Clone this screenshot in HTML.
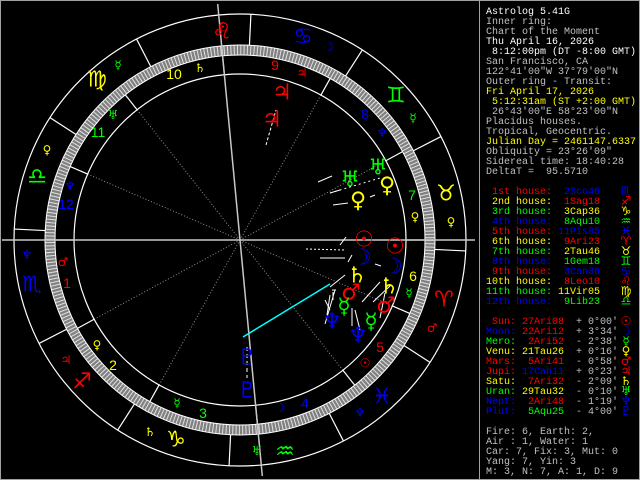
<!DOCTYPE html>
<html><head><meta charset="utf-8"><style>
html,body{margin:0;padding:0;background:#000;}
body{width:640px;height:480px;overflow:hidden;position:relative;}
svg{position:absolute;left:0;top:0;}
.t{font-family:"Liberation Mono","DejaVu Sans Mono",monospace;font-size:10px;white-space:pre;}
.g{font-family:"DejaVu Sans",sans-serif;text-anchor:middle;dominant-baseline:central;}
.n{font-family:"Liberation Sans",sans-serif;font-size:14px;text-anchor:middle;dominant-baseline:central;}
</style></head><body>
<svg width="640" height="480" viewBox="0 0 640 480" xmlns="http://www.w3.org/2000/svg">
<rect x="0.5" y="0.5" width="639" height="479" fill="none" stroke="#a0a0a0"/>
<line x1="479.5" y1="0" x2="479.5" y2="480" stroke="#a0a0a0"/>
<g transform="translate(240,240)" fill="none">
  <g stroke="#909090" stroke-width="1" stroke-dasharray="1 2">
    <line x1="0" y1="0" x2="166" y2="0" transform="rotate(-208.53)"/>
    <line x1="0" y1="0" x2="166" y2="0" transform="rotate(-240.83)"/>
    <line x1="0" y1="0" x2="166" y2="0" transform="rotate(-308.31)"/>
    <line x1="0" y1="0" x2="166" y2="0" transform="rotate(23.39)"/>
    <line x1="0" y1="0" x2="166" y2="0" transform="rotate(-28.53)"/>
    <line x1="0" y1="0" x2="166" y2="0" transform="rotate(-60.83)"/>
    <line x1="0" y1="0" x2="166" y2="0" transform="rotate(-128.31)"/>
    <line x1="0" y1="0" x2="166" y2="0" transform="rotate(-156.61)"/>
  </g>
  <circle r="226" stroke="#fff" stroke-width="1.2"/>
  <circle r="166" stroke="#fff" stroke-width="1.2"/>
  <circle r="190" stroke="#808080" stroke-width="10"/>
  <circle r="190" stroke="#e0e0e0" stroke-width="10" stroke-dasharray="1 2.316"/>
  <circle r="195" stroke="#fff" stroke-width="1"/>
  <circle r="185" stroke="#fff" stroke-width="1"/>
  <g stroke="#fff" stroke-width="1.2">
    <line x1="195" x2="226" transform="rotate(32.77)"/>
    <line x1="195" x2="226" transform="rotate(2.77)"/>
    <line x1="195" x2="226" transform="rotate(-27.23)"/>
    <line x1="195" x2="226" transform="rotate(-57.23)"/>
    <line x1="195" x2="226" transform="rotate(-87.23)"/>
    <line x1="195" x2="226" transform="rotate(-117.23)"/>
    <line x1="195" x2="226" transform="rotate(-147.23)"/>
    <line x1="195" x2="226" transform="rotate(-177.23)"/>
    <line x1="195" x2="226" transform="rotate(-207.23)"/>
    <line x1="195" x2="226" transform="rotate(-237.23)"/>
    <line x1="195" x2="226" transform="rotate(-267.23)"/>
    <line x1="195" x2="226" transform="rotate(-297.23)"/>
    <line x1="166" x2="185" transform="rotate(-180)"/>
    <line x1="166" x2="185" transform="rotate(-208.53)"/>
    <line x1="166" x2="185" transform="rotate(-240.83)"/>
    <line x1="166" x2="185" transform="rotate(-275.4)"/>
    <line x1="166" x2="185" transform="rotate(-308.31)"/>
    <line x1="166" x2="185" transform="rotate(23.39)"/>
    <line x1="166" x2="185" transform="rotate(0)"/>
    <line x1="166" x2="185" transform="rotate(-28.53)"/>
    <line x1="166" x2="185" transform="rotate(-60.83)"/>
    <line x1="166" x2="185" transform="rotate(-95.4)"/>
    <line x1="166" x2="185" transform="rotate(-128.31)"/>
    <line x1="166" x2="185" transform="rotate(-156.61)"/>
  </g>
  <g stroke="#c8c8c8" stroke-width="1.5">
    <line x1="-238" x2="235" y1="0" y2="0"/>
    <line x1="-237" x2="237" transform="rotate(-95.4)"/>
  </g>
</g>
<g stroke="#fff" stroke-width="1" fill="none">
  <line x1="332" y1="176" x2="318" y2="182"/>
  <line x1="340" y1="190" x2="330" y2="193"/>
  <line x1="348" y1="203" x2="333" y2="205"/>
  <line x1="375" y1="195" x2="370" y2="197"/>
  <line x1="340" y1="245" x2="346" y2="237"/>
  <line x1="348" y1="262" x2="352" y2="255"/>
  <line x1="345" y1="275" x2="330" y2="287"/>
  <line x1="381" y1="266" x2="375" y2="264"/>
  <line x1="380" y1="282" x2="362" y2="302"/>
  <line x1="325" y1="300" x2="330" y2="310"/>
  <line x1="332" y1="290" x2="336" y2="290"/>
  <line x1="330" y1="295" x2="327" y2="315"/>
  <line x1="333" y1="292" x2="333" y2="300"/>
  <line x1="335" y1="290" x2="325" y2="324"/>
  <line x1="352" y1="308" x2="352" y2="326"/>
  <line x1="355" y1="310" x2="360" y2="330"/>
  <line x1="385" y1="293" x2="380" y2="318"/>
  <line x1="391" y1="285" x2="373" y2="302"/>
  <line x1="266" y1="145" x2="276" y2="110" stroke-dasharray="3 2"/>
  <line x1="306" y1="249" x2="345" y2="250" stroke-dasharray="2 2"/>
  <line x1="320" y1="258" x2="345" y2="258"/>
  <line x1="330" y1="193" x2="380" y2="178"  stroke-dasharray="2 3"/>
  <line x1="247" y1="347" x2="247" y2="378" stroke-dasharray="4 3"/>
</g>
<line x1="243" y1="337" x2="330" y2="284" stroke="#00ffff" stroke-width="1.5"/>
<g class="g" font-size="22">
  <text x="222" y="32" fill="#f00">♌</text>
  <text x="97" y="80" fill="#ff0">♍</text>
  <text x="37" y="177" fill="#0f0">♎</text>
  <text x="32" y="285" fill="#00f">♏</text>
  <text x="82" y="382" fill="#f00">♐</text>
  <text x="176" y="440" fill="#ff0">♑</text>
  <text x="285" y="452" fill="#0f0">♒</text>
  <text x="382" y="397" fill="#00f">♓</text>
  <text x="444" y="300" fill="#f00">♈</text>
  <text x="446" y="194" fill="#ff0">♉</text>
  <text x="396" y="96" fill="#0f0">♊</text>
  <text x="303" y="37" fill="#00f">♋</text>
</g>
<g class="g" font-size="12">
  <text x="223" y="27" fill="#f00">☉</text>
  <text x="200" y="68" fill="#ff0">♄</text>
  <text x="118" y="65" fill="#0f0">☿</text>
  <text x="113" y="115" fill="#0f0">♅</text>
  <text x="47" y="150" fill="#ff0">♀</text>
  <text x="70" y="186" fill="#00f">♆</text>
  <text x="27" y="255" fill="#00f">♆</text>
  <text x="63" y="262" fill="#f00">♂</text>
  <text x="97" y="345" fill="#ff0">♀</text>
  <text x="66" y="360" fill="#f00">♃</text>
  <text x="177" y="403" fill="#0f0">☿</text>
  <text x="150" y="432" fill="#ff0">♄</text>
  <text x="280" y="408" fill="#00f">☽</text>
  <text x="257" y="451" fill="#0f0">♅</text>
  <text x="360" y="413" fill="#00f">♆</text>
  <text x="365" y="363" fill="#f00">☉</text>
  <text x="432" y="328" fill="#f00">♂</text>
  <text x="409" y="293" fill="#0f0">☿</text>
  <text x="415" y="217" fill="#ff0">♀</text>
  <text x="451" y="222" fill="#ff0">♀</text>
  <text x="413" y="118" fill="#0f0">☿</text>
  <text x="382" y="133" fill="#00f">♆</text>
  <text x="329" y="47" fill="#00f">☽</text>
  <text x="302" y="73" fill="#f00">♃</text>
</g>
<g class="n">
  <text x="67" y="283" fill="#f00">1</text>
  <text x="113" y="365" fill="#ff0">2</text>
  <text x="203" y="413" fill="#0f0">3</text>
  <text x="305" y="403" fill="#00f">4</text>
  <text x="380" y="347" fill="#f00">5</text>
  <text x="413" y="276" fill="#ff0">6</text>
  <text x="412" y="195" fill="#0f0">7</text>
  <text x="365" y="114" fill="#00f">8</text>
  <text x="275" y="65" fill="#f00">9</text>
  <text x="174" y="74" fill="#ff0">10</text>
  <text x="98" y="132" fill="#0f0">11</text>
  <text x="66" y="204" fill="#00f">12</text>
</g>
<g class="g" font-size="22">
  <text x="282" y="93" fill="#f00">♃</text>
  <text x="272" y="120" fill="#f00">♃</text>
  <text x="378" y="168" fill="#0f0">♅</text>
  <text x="350" y="180" fill="#0f0">♅</text>
  <text x="387" y="186" fill="#ff0">♀</text>
  <text x="358" y="201" fill="#ff0">♀</text>
  <text x="364" y="240" fill="#f00">☉</text>
  <text x="395" y="247" fill="#f00">☉</text>
  <text x="362" y="258" fill="#00f">☽</text>
  <text x="393" y="267" fill="#00f">☽</text>
  <text x="357" y="276" fill="#ff0">♄</text>
  <text x="389" y="287" fill="#ff0">♄</text>
  <text x="351" y="293" fill="#f00">♂</text>
  <text x="386" y="306" fill="#f00">♂</text>
  <text x="344" y="307" fill="#0f0">☿</text>
  <text x="371" y="322" fill="#0f0">☿</text>
  <text x="332" y="322" fill="#00f">♆</text>
  <text x="358" y="336" fill="#00f">♆</text>
  <text x="247" y="358" fill="#00f">♇</text>
  <text x="247" y="391" fill="#00f">♇</text>
</g>
<g class="t" fill="#c0c0c0">
<text x="486" y="14" fill="#fff">Astrolog 5.41G</text>
<text x="486" y="24">Inner ring:</text>
<text x="486" y="34">Chart of the Moment</text>
<text x="486" y="44" fill="#fff">Thu April 16, 2026</text>
<text x="486" y="54" fill="#fff">&#160;8:12:00pm (DT -8:00 GMT)</text>
<text x="486" y="64">San Francisco, CA</text>
<text x="486" y="74">122°41'00"W 37°79'00"N</text>
<text x="486" y="84">Outer ring - Transit:</text>
<text x="486" y="94" fill="#ff0">Fri April 17, 2026</text>
<text x="486" y="104" fill="#ff0">&#160;5:12:31am (ST +2:00 GMT)</text>
<text x="486" y="114">&#160;26°43'00"E 58°23'00"N</text>
<text x="486" y="124">Placidus houses.</text>
<text x="486" y="134">Tropical, Geocentric.</text>
<text x="486" y="144" fill="#ff0">Julian Day = 2461147.6337</text>
<text x="486" y="154">Obliquity = 23°26'09"</text>
<text x="486" y="164">Sidereal time: 18:40:28</text>
<text x="486" y="174">DeltaT =&#160;&#160;95.5710</text>
<text x="486" y="194"><tspan fill="#f00">&#160;1st house:</tspan><tspan fill="#00f">&#160;&#160;2Sco46</tspan></text>
<text x="486" y="204"><tspan fill="#ff0">&#160;2nd house:</tspan><tspan fill="#f00">&#160;&#160;1Sag18</tspan></text>
<text x="486" y="214"><tspan fill="#0f0">&#160;3rd house:</tspan><tspan fill="#ff0">&#160;&#160;3Cap36</tspan></text>
<text x="486" y="224"><tspan fill="#00f">&#160;4th house:</tspan><tspan fill="#0f0">&#160;&#160;8Aqu10</tspan></text>
<text x="486" y="234"><tspan fill="#f00">&#160;5th house:</tspan><tspan fill="#00f">&#160;11Pis05</tspan></text>
<text x="486" y="244"><tspan fill="#ff0">&#160;6th house:</tspan><tspan fill="#f00">&#160;&#160;9Ari23</tspan></text>
<text x="486" y="254"><tspan fill="#0f0">&#160;7th house:</tspan><tspan fill="#ff0">&#160;&#160;2Tau46</tspan></text>
<text x="486" y="264"><tspan fill="#00f">&#160;8th house:</tspan><tspan fill="#0f0">&#160;&#160;1Gem18</tspan></text>
<text x="486" y="274"><tspan fill="#f00">&#160;9th house:</tspan><tspan fill="#00f">&#160;&#160;3Can36</tspan></text>
<text x="486" y="284"><tspan fill="#ff0">10th house:</tspan><tspan fill="#f00">&#160;&#160;8Leo10</tspan></text>
<text x="486" y="294"><tspan fill="#0f0">11th house:</tspan><tspan fill="#ff0">&#160;11Vir05</tspan></text>
<text x="486" y="304"><tspan fill="#00f">12th house:</tspan><tspan fill="#0f0">&#160;&#160;9Lib23</tspan></text>
<text x="486" y="324"><tspan fill="#f00">&#160;Sun: 27Ari08</tspan>&#160;&#160;+ 0°00'</text>
<text x="486" y="334"><tspan fill="#00f">Moon: </tspan><tspan fill="#f00">22Ari12</tspan>&#160;&#160;+ 3°34'</text>
<text x="486" y="344"><tspan fill="#0f0">Mero: </tspan><tspan fill="#f00">&#160;2Ari52</tspan>&#160;&#160;- 2°38'</text>
<text x="486" y="354"><tspan fill="#ff0">Venu: 21Tau26</tspan>&#160;&#160;+ 0°16'</text>
<text x="486" y="364"><tspan fill="#f00">Mars:&#160;&#160;5Ari41</tspan>&#160;&#160;- 0°58'</text>
<text x="486" y="374"><tspan fill="#f00">Jupi: </tspan><tspan fill="#00f">17Can11</tspan>&#160;&#160;+ 0°23'</text>
<text x="486" y="384"><tspan fill="#ff0">Satu: </tspan><tspan fill="#f00">&#160;7Ari32</tspan>&#160;&#160;- 2°09'</text>
<text x="486" y="394"><tspan fill="#0f0">Uran: </tspan><tspan fill="#ff0">29Tau32</tspan>&#160;&#160;- 0°10'</text>
<text x="486" y="404"><tspan fill="#00f">Nept: </tspan><tspan fill="#f00">&#160;2Ari48</tspan>&#160;&#160;- 1°19'</text>
<text x="486" y="414"><tspan fill="#00f">Plut: </tspan><tspan fill="#0f0">&#160;5Aqu25</tspan>&#160;&#160;- 4°00'</text>
<text x="486" y="434">Fire: 6, Earth: 2,</text>
<text x="486" y="444">Air : 1, Water: 1</text>
<text x="486" y="454">Car: 7, Fix: 3, Mut: 0</text>
<text x="486" y="464">Yang: 7, Yin: 3</text>
<text x="486" y="474">M: 3, N: 7, A: 1, D: 9</text>
</g>
<g class="g" font-size="12">
<text x="626" y="191" fill="#00f">♏</text>
<text x="626" y="201" fill="#f00">♐</text>
<text x="626" y="211" fill="#ff0">♑</text>
<text x="626" y="221" fill="#0f0">♒</text>
<text x="626" y="231" fill="#00f">♓</text>
<text x="626" y="241" fill="#f00">♈</text>
<text x="626" y="251" fill="#ff0">♉</text>
<text x="626" y="261" fill="#0f0">♊</text>
<text x="626" y="271" fill="#00f">♋</text>
<text x="626" y="281" fill="#f00">♌</text>
<text x="626" y="291" fill="#ff0">♍</text>
<text x="626" y="301" fill="#0f0">♎</text>
<text x="626" y="321" fill="#f00">☉</text>
<text x="626" y="331" fill="#00f">☽</text>
<text x="626" y="341" fill="#0f0">☿</text>
<text x="626" y="351" fill="#ff0">♀</text>
<text x="626" y="361" fill="#f00">♂</text>
<text x="626" y="371" fill="#f00">♃</text>
<text x="626" y="381" fill="#ff0">♄</text>
<text x="626" y="391" fill="#0f0">♅</text>
<text x="626" y="401" fill="#00f">♆</text>
<text x="626" y="411" fill="#00f">♇</text>
</g>
</svg>
</body></html>
